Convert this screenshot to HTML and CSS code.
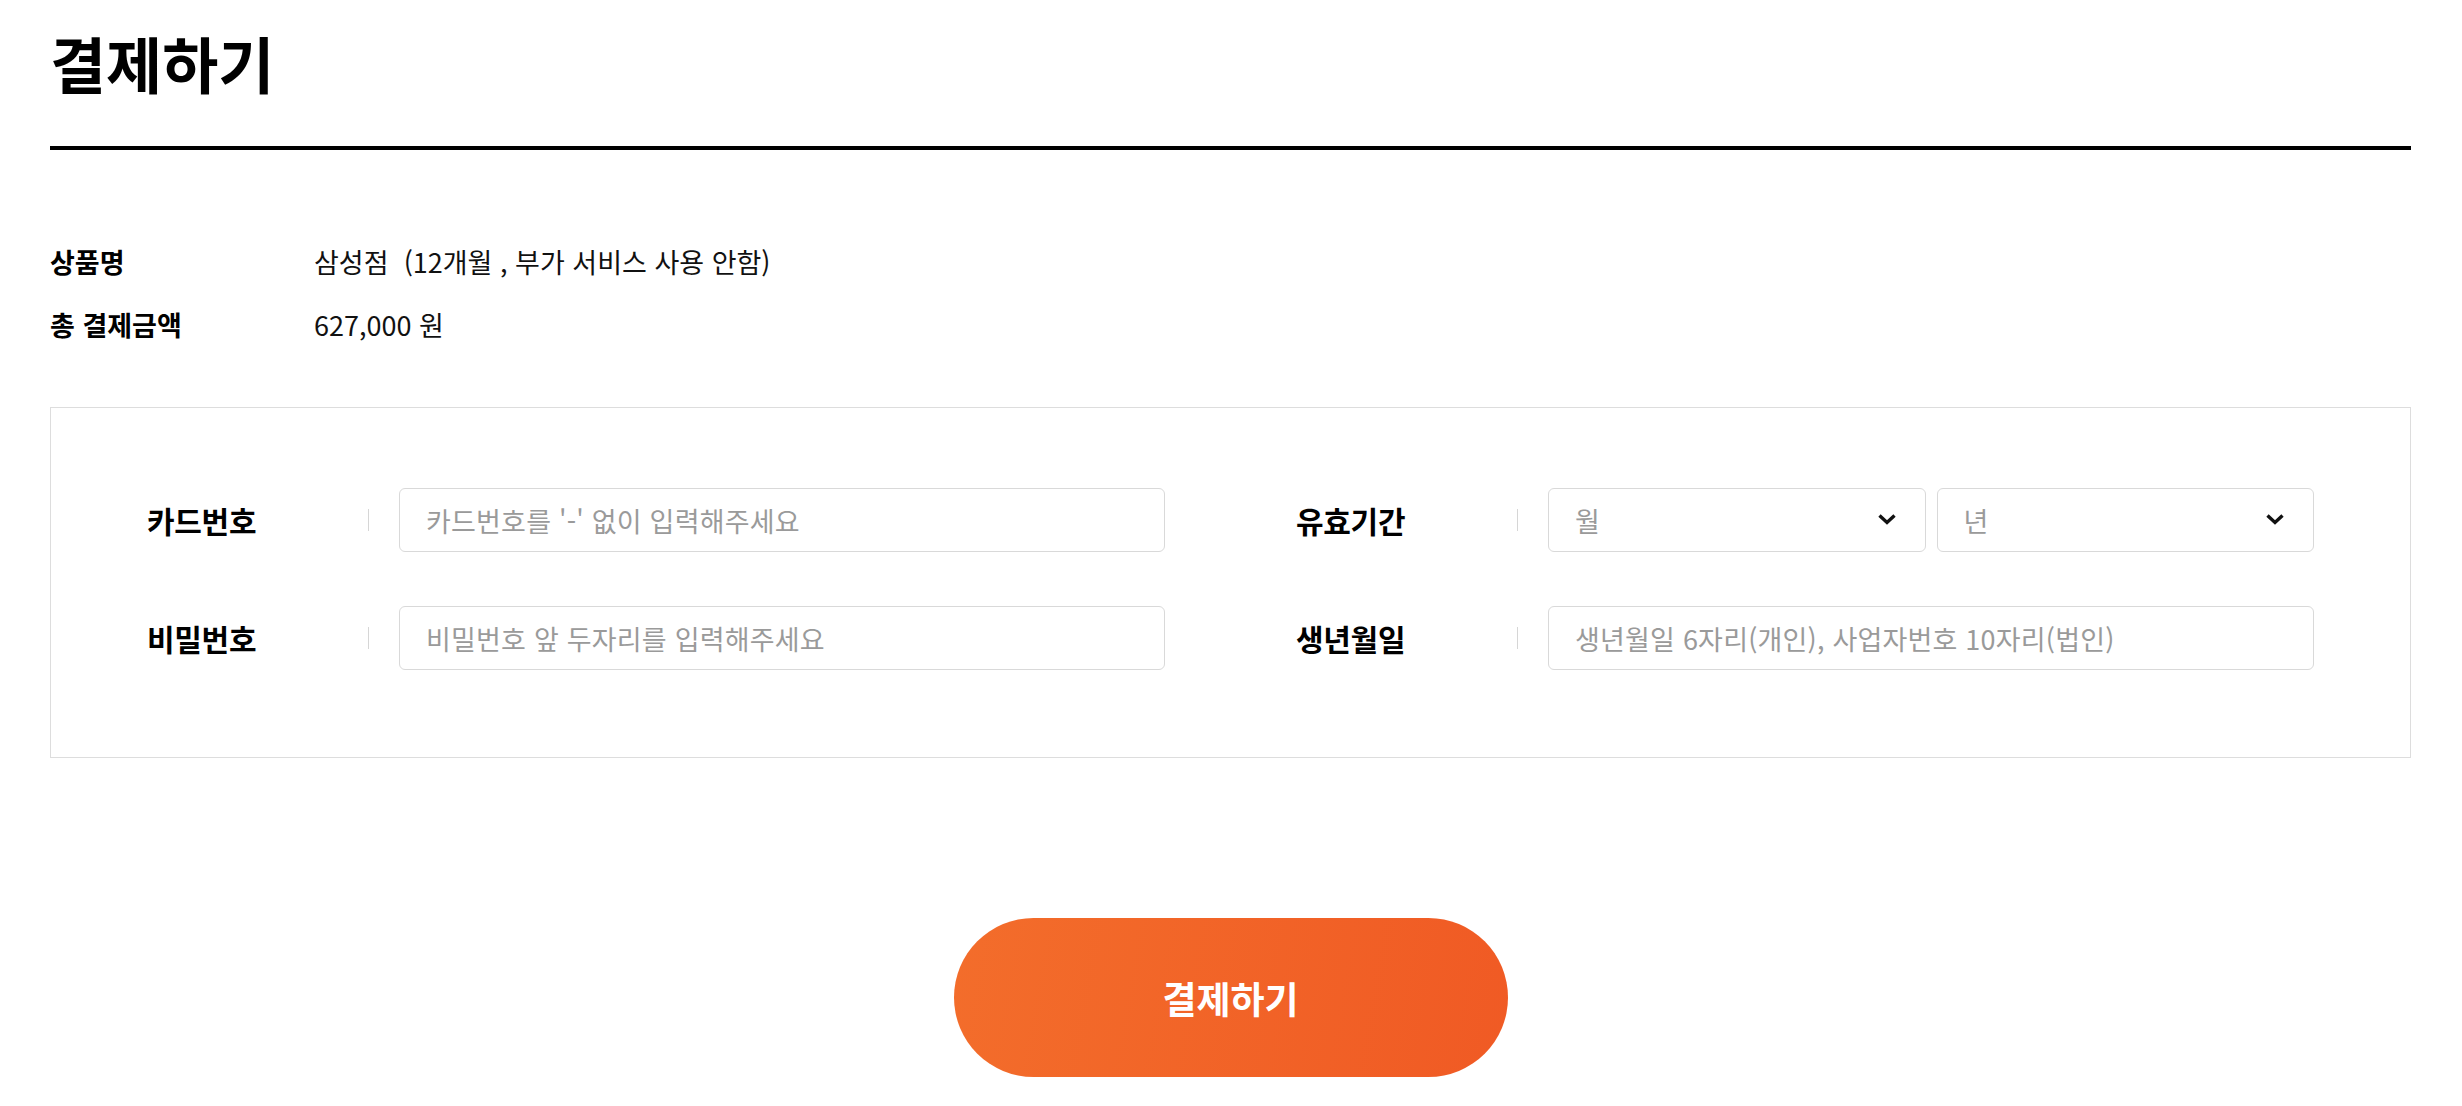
FILE: index.html
```html
<!DOCTYPE html>
<html lang="ko">
<head>
<meta charset="utf-8">
<title>결제하기</title>
<link rel="stylesheet" href="styles.css">
</head>
<body>
<div class="page">
  <header class="page-header">
    <h1 class="page-title">결제하기</h1>
  </header>

  <section class="order-info">
    <div class="info-row">
      <span class="info-label">상품명</span>
      <span class="info-value">삼성점&nbsp; (12개월 , 부가 서비스 사용 안함)</span>
    </div>
    <div class="info-row">
      <span class="info-label">총 결제금액</span>
      <span class="info-value">627,000 원</span>
    </div>
  </section>

  <section class="card-form">
    <div class="field">
      <label class="field-label" for="card-no">카드번호</label>
      <span class="field-divider"></span>
      <div class="field-control">
        <input class="text-input" id="card-no" type="text" placeholder="카드번호를 '-' 없이 입력해주세요">
      </div>
    </div>
    <div class="field">
      <span class="field-label">유효기간</span>
      <span class="field-divider"></span>
      <div class="field-control split">
        <div class="select-box">
          <span class="select-text">월</span>
          <svg class="chevron" width="20" height="12" viewBox="0 0 20 12"><path d="M2.5 2.5 L10 9.5 L17.5 2.5" fill="none" stroke="#111" stroke-width="3.4"/></svg>
        </div>
        <div class="select-box">
          <span class="select-text">년</span>
          <svg class="chevron" width="20" height="12" viewBox="0 0 20 12"><path d="M2.5 2.5 L10 9.5 L17.5 2.5" fill="none" stroke="#111" stroke-width="3.4"/></svg>
        </div>
      </div>
    </div>
    <div class="field">
      <label class="field-label" for="card-pw">비밀번호</label>
      <span class="field-divider"></span>
      <div class="field-control">
        <input class="text-input" id="card-pw" type="text" placeholder="비밀번호 앞 두자리를 입력해주세요">
      </div>
    </div>
    <div class="field">
      <label class="field-label" for="birth">생년월일</label>
      <span class="field-divider"></span>
      <div class="field-control">
        <input class="text-input" id="birth" type="text" placeholder="생년월일 6자리(개인), 사업자번호 10자리(법인)">
      </div>
    </div>
  </section>

  <div class="actions">
    <button class="pay-button" type="button">결제하기</button>
  </div>
</div>
</body>
</html>
```

FILE: styles.css
```css
* {
  box-sizing: border-box;
}

html, body {
  margin: 0;
  padding: 0;
  background: #ffffff;
}

body {
  font-family: "Noto Sans CJK KR", "Noto Sans", sans-serif;
  color: #111111;
}

.page {
  padding: 24px 51px 0 50px;
}

.page-header {
  padding-bottom: 44px;
  border-bottom: 4px solid #000000;
}

.page-title {
  margin: 0;
  font-size: 61px;
  line-height: 78px;
  font-weight: 700;
  color: #000000;
  letter-spacing: 0;
}

.order-info {
  padding-top: 92px;
  display: flex;
  flex-direction: column;
  gap: 23px;
}

.info-row {
  display: grid;
  grid-template-columns: 264px 1fr;
  align-items: center;
  height: 40px;
  font-size: 27px;
  line-height: 40px;
}

.info-label {
  font-weight: 700;
  color: #000000;
}

.info-value {
  font-weight: 400;
  color: #111111;
}

.card-form {
  margin-top: 62px;
  border: 1px solid #dddddd;
  padding: 80px 96px 87px;
  display: grid;
  grid-template-columns: 1fr 1fr;
  column-gap: 131px;
  row-gap: 54px;
}

.field {
  display: flex;
  align-items: center;
  height: 64px;
}

.field-label {
  width: 221px;
  flex: none;
  font-size: 30px;
  font-weight: 700;
  color: #000000;
  letter-spacing: -0.3px;
}

.field-divider {
  flex: none;
  width: 1px;
  height: 22px;
  background: #d6d6d6;
  margin-right: 30px;
}

.field-control {
  flex: 1;
  height: 64px;
  display: flex;
}

.field-control.split {
  gap: 11px;
}

.text-input {
  width: 100%;
  height: 64px;
  border: 1px solid #d9d9d9;
  border-radius: 6px;
  padding: 0 26px;
  font-family: inherit;
  font-size: 27px;
  color: #111111;
  background: #ffffff;
  outline: none;
  letter-spacing: 0.2px;
}

.text-input::placeholder {
  color: #9a9a9a;
}

.select-box {
  flex: 1;
  height: 64px;
  border: 1px solid #d9d9d9;
  border-radius: 6px;
  padding: 0 28px 0 26px;
  display: flex;
  align-items: center;
  justify-content: space-between;
  background: #ffffff;
}

.select-text {
  font-size: 27px;
  color: #9a9a9a;
}

.chevron {
  display: block;
  margin-top: -2px;
}

.actions {
  display: flex;
  justify-content: center;
  padding-top: 160px;
}

.pay-button {
  width: 554px;
  height: 159px;
  border: none;
  border-radius: 80px;
  background: linear-gradient(100deg, #f36d2b 0%, #f05a24 100%);
  color: #ffffff;
  font-family: inherit;
  font-size: 37px;
  font-weight: 700;
  letter-spacing: 0;
  cursor: pointer;
}
```
